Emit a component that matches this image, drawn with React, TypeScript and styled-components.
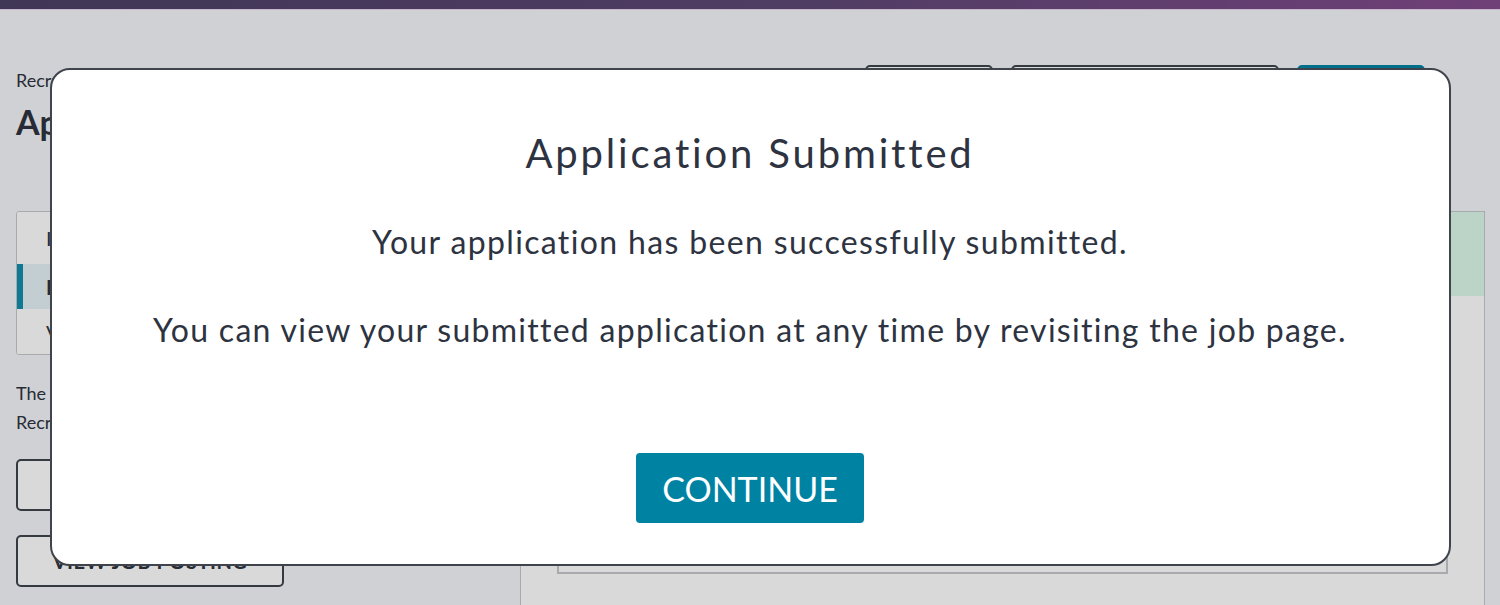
import React from 'react';
import styled, { createGlobalStyle } from 'styled-components';

const GlobalStyle = createGlobalStyle`
  html, body {
    margin: 0;
    padding: 0;
    background: #f5f6f9;
    font-family: Lato, "Open Sans", sans-serif;
    color: #2d3340;
  }
  * { box-sizing: border-box; }
`;

const Page = styled.div`
  width: 1500px;
  height: 605px;
  overflow: hidden;
  background: #f5f6f9;
`;

const TopBar = styled.div`
  height: 10px;
  background: linear-gradient(90deg, #4c4065 0%, #5f4876 55%, #834a8d 100%);
  border-bottom: 1px solid #ecd8ee;
`;

const Main = styled.div`
  padding: 0 15px 0 16px;
`;

const HeaderRow = styled.div`
  display: flex;
  justify-content: space-between;
  align-items: flex-start;
  height: 201px;
`;

const TitleBlock = styled.div`
  padding-top: 58px;
`;

const Crumb = styled.div`
  font-size: 18px;
  line-height: 24px;
`;

const PageTitle = styled.h1`
  margin: 8px 0 0;
  font-size: 34px;
  font-weight: 700;
  line-height: 44px;
`;

const Actions = styled.div`
  display: flex;
  gap: 18px;
  padding-top: 55px;
  padding-right: 60px;
`;

const ActionButton = styled.button<{ $primary?: boolean; $w: number }>`
  width: ${p => p.$w}px;
  height: 48px;
  border-radius: 5px;
  border: 2px solid ${p => (p.$primary ? '#0083a3' : '#3f434c')};
  background: ${p => (p.$primary ? '#0083a3' : '#ffffff')};
  color: ${p => (p.$primary ? '#ffffff' : '#2d3340')};
  font-family: Lato, sans-serif;
  font-size: 18px;
  font-weight: 700;
`;

const Columns = styled.div`
  display: flex;
  gap: 20px;
`;

const LeftCol = styled.div`
  width: 484px;
`;

const NavList = styled.div`
  border: 1px solid #c6c8cd;
  border-radius: 3px;
  background: #ffffff;
  overflow: hidden;
`;

const NavItem = styled.div<{ $active?: boolean; $h: number }>`
  height: ${p => p.$h}px;
  display: flex;
  align-items: center;
  padding-left: 23px;
  font-size: 20px;
  font-weight: ${p => (p.$active ? 700 : 400)};
  background: ${p => (p.$active ? '#e4f2f7' : '#ffffff')};
  border-left: 6px solid ${p => (p.$active ? '#128fad' : 'transparent')};
`;

const Note = styled.p`
  margin: 24px 0 0;
  font-size: 18px;
  line-height: 29px;
`;

const OutlineButton = styled.button<{ $w: number; $mt: number }>`
  display: block;
  width: ${p => p.$w}px;
  height: 52px;
  margin-top: ${p => p.$mt}px;
  border: 2px solid #3f434c;
  border-radius: 5px;
  background: #ffffff;
  color: #2d3340;
  font-family: Lato, sans-serif;
  font-size: 20px;
  font-weight: 700;
  letter-spacing: 0.5px;
  text-transform: uppercase;
`;

const RightCol = styled.div`
  flex: 1;
  height: 420px;
  border: 1px solid #c6c8cd;
  background: #ffffff;
`;

const SuccessBanner = styled.div`
  height: 84px;
  background: #ddfaeb;
`;

const Preview = styled.div`
  margin: 0 36px;
  height: 278px;
  border: 2px solid #c6c8cd;
  border-top: none;
`;

const Backdrop = styled.div`
  position: fixed;
  inset: 0;
  background: rgba(0, 0, 0, 0.15);
  display: flex;
  justify-content: center;
  align-items: flex-start;
  padding-top: 68px;
`;

const Modal = styled.div`
  width: 1401px;
  height: 498px;
  background: #ffffff;
  border: 2px solid #3f434c;
  border-radius: 20px;
  display: flex;
  flex-direction: column;
  align-items: center;
  padding-top: 58px;
  text-align: center;
`;

const ModalTitle = styled.h2`
  margin: 0;
  font-size: 40px;
  font-weight: 400;
  letter-spacing: 2.85px;
  line-height: 50px;
  color: #2d3340;
`;

const ModalText = styled.p<{ $mt: number; $ls: number }>`
  margin: ${p => p.$mt}px 0 0;
  font-size: 32px;
  letter-spacing: ${p => p.$ls}px;
  line-height: 42px;
  color: #2d3340;
`;

const ContinueButton = styled.button`
  margin-top: 102px;
  width: 228px;
  height: 70px;
  border: none;
  border-radius: 4px;
  background: #0083a3;
  color: #ffffff;
  font-family: Lato, sans-serif;
  font-size: 34px;
  font-weight: 400;
  cursor: pointer;
`;

export default function App() {
  return (
    <>
      <GlobalStyle />
      <Page>
        <TopBar />
        <Main>
          <HeaderRow>
            <TitleBlock>
              <Crumb>Recruiting</Crumb>
              <PageTitle>Application Review</PageTitle>
            </TitleBlock>
            <Actions>
              <ActionButton $w={128}>Print</ActionButton>
              <ActionButton $w={268}>Withdraw Application</ActionButton>
              <ActionButton $w={128} $primary>Submit</ActionButton>
            </Actions>
          </HeaderRow>
          <Columns>
            <LeftCol>
              <NavList>
                <NavItem $h={52}>Info</NavItem>
                <NavItem $h={45} $active>Form</NavItem>
                <NavItem $h={45}>View</NavItem>
              </NavList>
              <Note>
                The application has been submitted to the
                <br />
                Recruiting team for review.
              </Note>
              <OutlineButton $w={484} $mt={22}>Download PDF</OutlineButton>
              <OutlineButton $w={268} $mt={24}>View Job Posting</OutlineButton>
            </LeftCol>
            <RightCol>
              <SuccessBanner />
              <Preview />
            </RightCol>
          </Columns>
        </Main>
        <Backdrop>
          <Modal role="dialog">
            <ModalTitle>Application Submitted</ModalTitle>
            <ModalText $mt={43} $ls={1.35}>Your application has been successfully submitted.</ModalText>
            <ModalText $mt={46} $ls={1.28}>
              You can view your submitted application at any time by revisiting the job page.
            </ModalText>
            <ContinueButton>CONTINUE</ContinueButton>
          </Modal>
        </Backdrop>
      </Page>
    </>
  );
}
